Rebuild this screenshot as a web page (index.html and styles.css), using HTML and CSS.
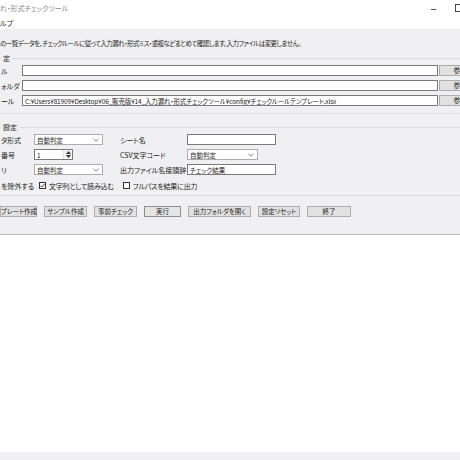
FILE: index.html
```html
<!DOCTYPE html>
<html lang="ja">
<head>
    <meta charset="UTF-8">
    <meta name="viewport" content="width=device-width, initial-scale=1.0">
    <title>入力漏れ・形式チェックツール</title>
    <link rel="stylesheet" href="styles.css">
</head>
<body>

    <div class="window">
        <div class="titlebar">
            <span class="title">れ・形式チェックツール</span>
            <div class="controls">
                <span class="ctl-min"></span>
                <span class="ctl-max"></span>
            </div>
        </div>
        <div class="menubar"><span class="menu-item">ルプ</span></div>

        <div class="main">
            <p class="desc">の一覧データを、チェックルールに従って入力漏れ・形式ミス・重複などまとめて確認します。入力ファイルは変更しません。</p>

            <fieldset class="group">
                <legend>定</legend>
                <div class="file-rows">
                    <span class="lbl">ル</span>
                    <input class="textbox" type="text" value="">
                    <button class="btn btn-ref">参照</button>

                    <span class="lbl">ォルダ</span>
                    <input class="textbox" type="text" value="">
                    <button class="btn btn-ref">参照</button>

                    <span class="lbl">ール</span>
                    <input class="textbox path" type="text" value="C:¥Users¥81909¥Desktop¥06_販売版¥14_入力漏れ・形式チェックツール¥config¥チェックルールテンプレート.xlsx">
                    <button class="btn btn-ref">参照</button>
                </div>
            </fieldset>

            <fieldset class="group group-opts">
                <legend>設定</legend>
                <div class="opt-grid">
                    <span class="lbl">タ形式</span>
                    <div class="combo combo-wide">
                        <span>自動判定</span>
                        <svg class="chev" width="6" height="4" viewBox="0 0 6 4"><polyline points="0.5,0.8 3,3.2 5.5,0.8" fill="none" stroke="#666" stroke-width="0.8"/></svg>
                    </div>
                    <span></span>
                    <span class="lbl">シート名</span>
                    <input class="textbox box-sheet" type="text" value="">

                    <span class="lbl">番号</span>
                    <div class="spin">
                        <span class="spin-val">1</span>
                        <div class="spin-btns">
                            <svg width="5" height="3" viewBox="0 0 5 3"><polygon points="2.5,0 5,3 0,3" fill="#333"/></svg>
                            <svg width="5" height="3" viewBox="0 0 5 3"><polygon points="0,0 5,0 2.5,3" fill="#333"/></svg>
                        </div>
                    </div>
                    <span></span>
                    <span class="lbl">CSV文字コード</span>
                    <div class="combo combo-csv">
                        <span>自動判定</span>
                        <svg class="chev" width="6" height="4" viewBox="0 0 6 4"><polyline points="0.5,0.8 3,3.2 5.5,0.8" fill="none" stroke="#666" stroke-width="0.8"/></svg>
                    </div>

                    <span class="lbl">リ</span>
                    <div class="combo combo-wide">
                        <span>自動判定</span>
                        <svg class="chev" width="6" height="4" viewBox="0 0 6 4"><polyline points="0.5,0.8 3,3.2 5.5,0.8" fill="none" stroke="#666" stroke-width="0.8"/></svg>
                    </div>
                    <span></span>
                    <span class="lbl">出力ファイル名接頭辞</span>
                    <input class="textbox box-sheet" type="text" value="チェック結果">
                </div>

                <div class="check-row">
                    <span class="lbl">を除外する</span>
                    <label class="check">
                        <span class="box">
                            <svg width="7" height="7" viewBox="0 0 7 7"><polyline points="1.3,3.6 2.8,5.1 5.8,1.8" fill="none" stroke="#222" stroke-width="0.9"/></svg>
                        </span>
                        文字列として読み込む
                    </label>
                    <label class="check">
                        <span class="box"></span>
                        フルパスを結果に出力
                    </label>
                </div>
            </fieldset>

            <div class="actions">
                <button class="btn btn-tpl">プレート作成</button>
                <button class="btn btn-sample">サンプル作成</button>
                <button class="btn btn-pre">事前チェック</button>
                <button class="btn btn-run">実行</button>
                <button class="btn btn-open">出力フォルダを開く</button>
                <button class="btn btn-reset">設定リセット</button>
                <button class="btn btn-exit">終了</button>
            </div>
        </div>

        <div class="output"></div>
        <div class="statusbar"></div>
    </div>

</body>
</html>
```

FILE: styles.css
```css
body { margin: 0; overflow: hidden; background: #fff; font-family: "Noto Sans CJK JP", "Noto Sans", sans-serif; font-size: 7px; color: #1c1c1c; font-feature-settings: "palt"; }
.window { width: 460px; height: 460px; display: flex; flex-direction: column; }

/* タイトルバー・メニュー */
.titlebar { height: 16px; display: flex; align-items: center; justify-content: space-between; background: #fff; }
.title { color: #8a8a8a; line-height: 10px; }
.controls { display: flex; align-items: center; gap: 19px; margin-right: -3px; }
.ctl-min { width: 5px; height: 1px; background: #555; margin-top: 2px; }
.ctl-max { width: 6px; height: 6px; border: 1px solid #444; }
.menubar { height: 13px; display: flex; align-items: center; background: #fff; }
.menu-item { line-height: 10px; }

/* メイン */
.main { background: #f0eff1; padding: 9px 0 17px; border-bottom: 1px solid #b9b9b9; }
.desc { margin: 0; line-height: 10px; white-space: nowrap; font-size: 6.5px; letter-spacing: -0.55px; }

.group { margin: 5px -10px 0; padding: 2px 10px 7px; border: 1px solid #dcdcdc; min-width: 0; }
.group legend { padding: 0 2px; line-height: 10px; }
.group-opts { margin-top: 8px; padding-bottom: 4px; }

.lbl { line-height: 10px; white-space: nowrap; }

.textbox { height: 11px; box-sizing: border-box; border: 1px solid #7a7a7a; background: #fff; padding: 0 2px; margin: 0; font: inherit; font-size: 6.5px; color: #1c1c1c; outline: none; }
.path { letter-spacing: -0.15px; }

.file-rows { display: grid; grid-template-columns: 20px 416px 42px; column-gap: 1px; row-gap: 4px; align-items: center; }
.file-rows .lbl { overflow: visible; }

.opt-grid { display: grid; grid-template-columns: 33px 69px 17px 67px 89px; row-gap: 4px; align-items: center; }
.box-sheet { width: 89px; }

.combo { height: 11px; box-sizing: border-box; border: 1px solid #adadad; background: #fff; display: flex; align-items: center; justify-content: space-between; padding: 0 3px 0 2px; font-size: 6.5px; }
.combo-wide { width: 69px; }
.combo-csv { width: 71px; }
.chev { display: block; }

.spin { width: 39px; height: 11px; box-sizing: border-box; border: 1px solid #7a7a7a; background: #fff; display: flex; align-items: center; justify-content: space-between; padding-left: 2px; }
.spin-val { font-size: 6.5px; }
.spin-btns { width: 8px; height: 9px; border-left: 1px solid #ddd; background: #f3f3f3; display: flex; flex-direction: column; align-items: center; justify-content: space-around; }
.spin-btns svg { display: block; }

.check-row { display: flex; align-items: center; margin-top: 5px; height: 11px; }
.check-row .lbl { width: 38px; }
.check { display: flex; align-items: center; gap: 3px; line-height: 10px; margin-right: 9px; letter-spacing: -0.2px; }
.box { width: 7px; height: 7px; box-sizing: border-box; border: 1px solid #333; background: #fff; display: flex; align-items: center; justify-content: center; }
.box svg { display: block; flex: none; }

/* ボタン */
.btn { height: 11px; box-sizing: border-box; border: 1px solid #adadad; background: #e1e1e1; font: inherit; font-size: 6.5px; color: #1c1c1c; padding: 0; line-height: 9px; white-space: nowrap; }
.btn-ref { width: 42px; }

.actions { display: flex; gap: 7px; margin-top: 10px; }
.btn-tpl { width: 37px; }
.btn-sample { width: 43px; }
.btn-pre { width: 43px; }
.btn-run { width: 37px; border-color: #8e8e8e; background: #e5e5e5; }
.btn-open { width: 63px; }
.btn-reset { width: 42px; }
.btn-exit { width: 44px; }

.output { flex: 1; background: #fff; }
.statusbar { height: 8px; background: #f0eff1; }
```
